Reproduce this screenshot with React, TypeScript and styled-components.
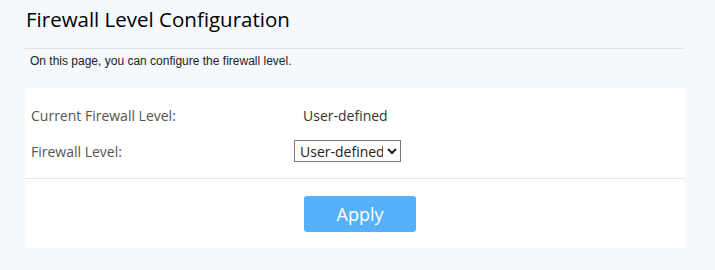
import styled, { createGlobalStyle } from "styled-components"

const GlobalStyle = createGlobalStyle`
  html, body {
    margin: 0;
    padding: 0;
    background: #f5f8fd;
  }
`

const FirewallPage = () => {
  return (
    <Wrapper>
      <GlobalStyle />
      <h1 className="title">Firewall Level Configuration</h1>
      <p className="desc">On this page, you can configure the firewall level.</p>
      <Panel>
        <div className="fields">
          <Row>
            <span className="label">Current Firewall Level:</span>
            <span className="value">User-defined</span>
          </Row>
          <Row>
            <span className="label">Firewall Level:</span>
            <select className="level-select" defaultValue="custom">
              <option value="high">High</option>
              <option value="medium">Medium</option>
              <option value="low">Low</option>
              <option value="custom">User-defined</option>
            </select>
          </Row>
        </div>
        <div className="actions">
          <button type="button" className="apply-btn">Apply</button>
        </div>
      </Panel>
    </Wrapper>
  )
}

const Wrapper = styled.section`
  padding: 0 30px 22px 25px;
  .title{
    margin: 0;
    padding: 5px 0 0 1px;
    height: 49px;
    box-sizing: border-box;
    font-family: "Open Sans", "Noto Sans", sans-serif;
    font-weight: 400;
    font-size: 20.5px;
    line-height: 28px;
    color: #000;
    border-bottom: 1px solid #e2e4e8;
  }
  .desc{
    margin: 0;
    padding: 4px 0 0 5px;
    height: 39px;
    box-sizing: border-box;
    font-family: "Liberation Sans", Arial, sans-serif;
    font-size: 12px;
    line-height: 16px;
    color: #222;
  }
`

const Panel = styled.div`
  background: #fff;
  .fields{
    padding: 16px 0 16px 6px;
    border-bottom: 1px solid #e6e6e6;
    display: flex;
    flex-direction: column;
    gap: 14px;
  }
  .actions{
    display: flex;
    justify-content: flex-start;
    padding: 17px 0 16px 279px;
  }
  .apply-btn{
    width: 112px;
    height: 36px;
    border: none;
    border-radius: 3px;
    background: #57b1f9;
    color: #fff;
    font-family: "Open Sans", "Noto Sans", sans-serif;
    font-size: 18px;
    cursor: pointer;
  }
`

const Row = styled.div`
  display: grid;
  grid-template-columns: 263px 1fr;
  align-items: center;
  height: 22px;
  font-family: "Open Sans", "Noto Sans", sans-serif;
  font-size: 14px;
  .label{
    color: #555;
  }
  .value{
    color: #333;
    padding-left: 9px;
  }
  .level-select{
    justify-self: start;
    width: 107px;
    height: 22px;
    font-family: "Open Sans", "Noto Sans", sans-serif;
    font-size: 14px;
    color: #222;
    border: 1px solid #767676;
    border-radius: 0;
    background: #fff;
    padding: 0 1px;
  }
`

export default FirewallPage
